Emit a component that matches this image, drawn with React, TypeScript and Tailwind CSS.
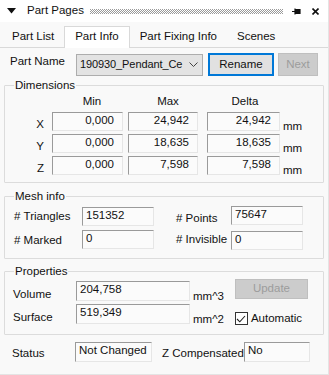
import React from "react";

const font = "font-['Tahoma','Liberation_Sans',sans-serif]";

const Field = ({ value, w, align = "left", className = "" }: { value: string; w: string; align?: "left" | "right"; className?: string }) => (
  <div
    className={`h-[19px] ${w} border-t border-l border-t-[#9a9a9a] border-l-[#9a9a9a] border-r border-b border-r-[#e6e6e6] border-b-[#e6e6e6] bg-[#fbfbfb] text-[11.5px] leading-[15px] px-[3px] whitespace-nowrap overflow-hidden ${
      align === "right" ? "text-right pr-[8px]" : ""
    } ${className}`}
  >
    {value}
  </div>
);

const Group = ({ title, className = "", children }: { title: string; className?: string; children: React.ReactNode }) => (
  <fieldset className={`mx-[4px] border border-[#dcdcdc] rounded-[1px] px-[6px] ${className}`}>
    <legend className="ml-[3px] px-[1px] text-[11.5px] leading-[13px]">{title}</legend>
    {children}
  </fieldset>
);

const dims = [
  { axis: "X", min: "0,000", max: "24,942", delta: "24,942" },
  { axis: "Y", min: "0,000", max: "18,635", delta: "18,635" },
  { axis: "Z", min: "0,000", max: "7,598", delta: "7,598" },
];

export default function App() {
  return (
    <div className={`w-[329px] h-[375px] bg-[#f9f9f9] text-[#111] ${font} text-[11.5px] border-r border-b border-[#e4e4e4] overflow-hidden`}>
      {/* title bar */}
      <div className="h-[22px] flex items-center bg-white">
        <svg width="9" height="6" viewBox="0 0 9 6" className="ml-[7px]">
          <path d="M0 0 L9 0 L4.5 5.5 Z" fill="#111" />
        </svg>
        <span className="ml-[11px] text-[11.5px]">Part Pages</span>
        <svg className="ml-[6px] flex-1 h-[5px]" height="5">
          <defs>
            <pattern id="dots" width="2" height="2" patternUnits="userSpaceOnUse">
              <rect x="0" y="0" width="1" height="1" fill="#9a9a9a" />
              <rect x="1" y="1" width="1" height="1" fill="#9a9a9a" />
            </pattern>
          </defs>
          <rect width="100%" height="5" fill="url(#dots)" />
        </svg>
        <svg width="9" height="7" viewBox="0 0 9 7" className="ml-[9px]">
          <path d="M0 3.5 H3 M3 0.5 V6.5 M3 1.5 H8 V5.5 H3" stroke="#111" strokeWidth="1.2" fill="#111" />
        </svg>
        <svg width="7" height="7" viewBox="0 0 7 7" className="ml-[11px] mr-[9px]">
          <path d="M0.5 0.5 L6.5 6.5 M6.5 0.5 L0.5 6.5" stroke="#111" strokeWidth="1.6" />
        </svg>
      </div>

      {/* tabs */}
      <div className="mt-[5px] h-[21px] flex items-end border-b border-[#d9d9d9] pl-[2px]">
        <div className="px-[10px] h-[20px] leading-[19px]">Part List</div>
        <div className="px-[10px] h-[22px] leading-[19px] bg-white border border-b-0 border-[#d9d9d9] -mb-px">Part Info</div>
        <div className="px-[10px] h-[20px] leading-[19px]">Part Fixing Info</div>
        <div className="px-[10px] h-[20px] leading-[19px]">Scenes</div>
      </div>

      {/* part name row */}
      <div className="mt-[5px] flex items-center h-[23px]">
        <span className="ml-[10px] w-[66px] -mt-[5px]">Part Name</span>
        <div className="h-[22px] w-[127px] bg-[#e3e3e3] border border-[#adadad] flex items-center pl-[3px] overflow-hidden">
          <span className="flex-1 whitespace-nowrap overflow-hidden text-[11px] tracking-[-0.1px]">190930_Pendant_Ce</span>
          <svg width="9" height="5" viewBox="0 0 9 5" className="mx-[4px] shrink-0">
            <path d="M0.5 0.5 L4.5 4.5 L8.5 0.5" stroke="#444" fill="none" />
          </svg>
        </div>
        <div className="ml-[5px] h-[23px] w-[66px] bg-[#e1e1e1] border-2 border-[#0078d7] flex items-center justify-center">Rename</div>
        <div className="ml-[4px] h-[23px] w-[40px] bg-[#cccccc] border border-[#bfbfbf] text-[#9c9c9c] flex items-center justify-center">Next</div>
      </div>

      {/* dimensions */}
      <Group title="Dimensions" className="mt-[3px] h-[104px]">
        <div className="flex h-[14px] mt-[2px] leading-[14px]">
          <div className="w-[43px]" />
          <div className="w-[76px] text-center">Min</div>
          <div className="w-[76px] text-center">Max</div>
          <div className="w-[78px] text-center">Delta</div>
        </div>
        <div className="flex flex-col gap-[3px] mt-[4px]">
          {dims.map((d) => (
            <div key={d.axis} className="flex items-start h-[19px]">
              <div className="w-[36px] text-right pr-[3px] leading-[19px] mt-[3px]">{d.axis}</div>
              <Field value={d.min} w="w-[71px]" align="right" className="ml-[5px]" />
              <Field value={d.max} w="w-[70px]" align="right" className="ml-[5px]" />
              <Field value={d.delta} w="w-[73px]" align="right" className="ml-[9px]" />
              <div className="ml-[3px] mt-[7px] leading-[14px]">mm</div>
            </div>
          ))}
        </div>
      </Group>

      {/* mesh info */}
      <Group title="Mesh info" className="mt-[7px] h-[69px]">
        <div className="flex flex-col gap-[4px] mt-[4px]">
          <div className="flex items-center h-[19px]">
            <span className="w-[68px] ml-[3px]">#&nbsp;Triangles</span>
            <Field value="151352" w="w-[72px]" />
            <span className="ml-[22px] w-[55px] mt-[4px]">#&nbsp;Points</span>
            <Field value="75647" w="w-[72px]" className="-mt-[2px]" />
          </div>
          <div className="flex items-center h-[19px]">
            <span className="w-[68px] ml-[3px] mt-[3px]">#&nbsp;Marked</span>
            <Field value="0" w="w-[72px]" />
            <span className="ml-[22px] w-[55px]">#&nbsp;Invisible</span>
            <Field value="0" w="w-[72px]" className="mt-[2px]" />
          </div>
        </div>
      </Group>

      {/* properties */}
      <Group title="Properties" className="mt-[6px] h-[70px]">
        <div className="flex mt-[3px]">
          <div className="flex flex-col gap-[3px]">
            <div className="flex items-start h-[20px]">
              <span className="w-[63px] ml-[2px] mt-[5px]">Volume</span>
              <Field value="204,758" w="w-[114px]" className="h-[20px]" />
              <span className="ml-[3px] mt-[7px]">mm^3</span>
            </div>
            <div className="flex items-start h-[20px]">
              <span className="w-[63px] ml-[2px] mt-[5px]">Surface</span>
              <Field value="519,349" w="w-[114px]" className="h-[20px]" />
              <span className="ml-[3px] mt-[7px]">mm^2</span>
            </div>
          </div>
          <div className="ml-[11px] flex flex-col">
            <div className="h-[20px] w-[73px] bg-[#cccccc] border border-[#bfbfbf] text-[#9c9c9c] flex items-center justify-center -mt-[2px]">Update</div>
            <div className="flex items-center mt-[11px]">
              <div className="w-[13px] h-[13px] border border-[#333] bg-white flex items-center justify-center">
                <svg width="10" height="8" viewBox="0 0 10 8">
                  <path d="M1 4 L3.8 6.8 L9 1" stroke="#222" strokeWidth="1.1" fill="none" />
                </svg>
              </div>
              <span className="ml-[3px]">Automatic</span>
            </div>
          </div>
        </div>
      </Group>

      {/* status */}
      <div className="mt-[7px] flex items-start">
        <span className="ml-[12px] w-[63px] mt-[3px]">Status</span>
        <Field value="Not Changed" w="w-[77px]" className="h-[20px]" />
        <span className="ml-[10px] w-[82px] mt-[3px] whitespace-nowrap">Z&nbsp;Compensated</span>
        <Field value="No" w="w-[66px]" className="h-[20px]" />
      </div>
    </div>
  );
}
